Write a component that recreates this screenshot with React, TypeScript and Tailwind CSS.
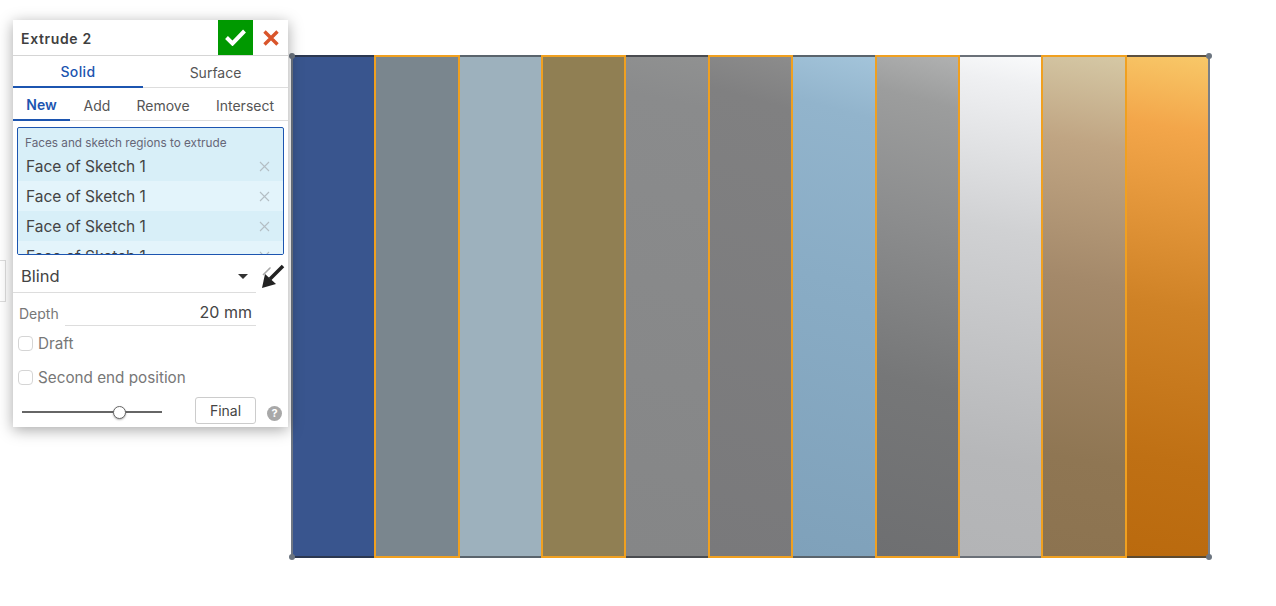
import React from "react";

const columns = [
  "bg-[#39558e] border-l-2 border-l-[#6f7784] border-t-2 border-t-[#2c3850] border-b-2 border-b-[#2c3850]",
  "bg-[#7a868e] border-2 border-[#f0a020]",
  "bg-[#9db1bd] border-t-2 border-t-[#5a646c] border-b-2 border-b-[#5a646c]",
  "bg-[#907f53] border-2 border-[#f0a020]",
  "bg-[linear-gradient(192deg,#909191,#8a8b8c_10%,#858687)] border-t-2 border-t-[#4a4c50] border-b-2 border-b-[#4a4c50]",
  "bg-[linear-gradient(195deg,#8c8c8c,#808081_10%,#79797b)] border-2 border-[#f0a020]",
  "bg-[linear-gradient(195deg,#a3c4da,#92b4cc_12%,#89acc5_45%,#7fa1ba)] border-t-2 border-t-[#5a646c] border-b-2 border-b-[#5a646c]",
  "bg-[linear-gradient(195deg,#b0b1b1,#9c9d9d_10%,#8b8c8d_35%,#767778_65%,#6e6f71)] border-2 border-[#f0a020]",
  "bg-[linear-gradient(190deg,#f9fafb,#eff0f2_6%,#d0d1d3_35%,#b6b7b9_80%,#b3b4b6)] border-t-2 border-t-[#6a7078] border-b-2 border-b-[#6a7078]",
  "bg-[linear-gradient(190deg,#d5c8a5,#c0a583_18%,#a4896a_45%,#8f7653_80%,#8c7350)] border-2 border-[#f0a020]",
  "bg-[linear-gradient(190deg,#f8c868,#f3a64a_15%,#cf8226_50%,#bf7014_80%,#ba6a0e)] border-t-2 border-t-[#5c5040] border-b-2 border-b-[#5c4a30] border-r-2 border-r-[#7a7f86]",
];

const Dot = ({ className }: { className: string }) => (
  <span className={`absolute h-[6px] w-[6px] rounded-full bg-[#6c7580] ${className}`} />
);

const Row = ({ tint }: { tint: boolean }) => (
  <div className={`flex h-[30px] shrink-0 items-center justify-between pl-2 pr-[13px] text-[15.5px] text-[#444] ${tint ? "bg-[#d8eff8]" : "bg-[#e3f4fb]"}`}>
    <span className="pt-[2px]">Face of Sketch 1</span>
    <svg width="11" height="11" viewBox="0 0 11 11" stroke="#b4bec4" strokeWidth="1.1"><path d="M1 1l9 9M10 1l-9 9" /></svg>
  </div>
);

export default function App() {
  return (
    <div className="relative h-[606px] w-[1276px] overflow-hidden bg-white pl-[291px] pt-[55px] font-['Inter',sans-serif]">
      <div className="relative flex h-[503px] w-[919px]">
        {columns.map((c, i) => (
          <div key={i} className={`h-full flex-1 ${c}`} />
        ))}
        <Dot className="-left-[2px] -top-[2px]" />
        <Dot className="-right-[2px] -top-[2px]" />
        <Dot className="-left-[2px] -bottom-[2px]" />
        <Dot className="-right-[2px] -bottom-[2px]" />
      </div>

      <div className="absolute left-0 top-[260px] h-[42px] w-[6px] border border-l-0 border-[#ddd] bg-white" />

      <div className="absolute left-[13px] top-[20px] flex h-[407px] w-[275px] flex-col bg-white shadow-[0_3px_14px_rgba(0,0,0,0.35)]">
        <div className="flex h-[36px] shrink-0 items-start border-b border-[#d5d5d5]">
          <div className="flex h-[36px] flex-1 items-center pl-2 text-[14px] font-semibold tracking-[0.65px] text-[#3f3f3f]">Extrude 2</div>
          <div className="flex h-[35px] w-[35px] items-center justify-center bg-[#009900]">
            <svg width="21" height="17" viewBox="0 0 21 17" fill="none" stroke="#fff" strokeWidth="4"><path d="M1.5 8.5l6 6L19.5 2" /></svg>
          </div>
          <div className="flex h-[35px] w-[35px] items-center justify-center">
            <svg width="16" height="16" viewBox="0 0 16 16" fill="none" stroke="#d9552b" strokeWidth="3.4"><path d="M1.5 1.5l13 13M14.5 1.5l-13 13" /></svg>
          </div>
        </div>

        <div className="flex h-[32px] shrink-0 border-b border-[#ddd] text-[14px]">
          <div className="flex h-[32px] w-[130px] items-center justify-center border-b-2 border-[#1c55b0] pt-px font-medium tracking-[0.4px] text-[#1c55b0]">Solid</div>
          <div className="flex h-[31px] flex-1 items-center justify-center pt-px text-[#555]">Surface</div>
        </div>

        <div className="flex h-[33px] shrink-0 border-b border-[#ddd] text-[14px] text-[#555]">
          <div className="flex h-[33px] w-[57px] items-center justify-center border-b-2 border-[#1c55b0] pt-[2px] font-semibold text-[#1c55b0]">New</div>
          <div className="flex h-[32px] w-[54px] items-center justify-center pt-[2px]">Add</div>
          <div className="flex h-[32px] w-[78px] items-center justify-center pt-[2px]">Remove</div>
          <div className="flex h-[32px] flex-1 items-center justify-center pt-[2px]">Intersect</div>
        </div>

        <div className="mx-1 mt-[6px] flex h-[128px] shrink-0 flex-col overflow-hidden rounded-[2px] border border-[#1c55b0] bg-[#d8eff8]">
          <div className="flex h-[23px] shrink-0 items-end pl-[7px] text-[11.75px] leading-[16px] text-[#667]">Faces and sketch regions to extrude</div>
          <Row tint />
          <Row tint={false} />
          <Row tint />
          <Row tint={false} />
        </div>

        <div className="relative flex h-[38px] w-[243px] shrink-0 items-center justify-between border-b border-[#ddd] pl-2 pr-[8px] pt-[5px] text-[16.5px] text-[#444]">
          <span>Blind</span>
          <span className="h-0 w-0 border-x-[5.5px] border-t-[5px] border-x-transparent border-t-[#333]" />
          <svg className="absolute left-[247px] top-[9px]" width="25" height="25" viewBox="0 0 25 25">
            <path d="M3 11L9 5" stroke="#a8a8a8" strokeWidth="1.6" />
            <path d="M10 3l1 1-2 2-1-1z" fill="#a8a8a8" />
            <path d="M23 2L10 15" stroke="#222" strokeWidth="3.6" />
            <path d="M2 24l3-14 11 10z" fill="#222" />
          </svg>
        </div>

        <div className="flex h-[33px] shrink-0 items-stretch pl-[6px]">
          <span className="flex w-[46px] items-center pt-[7px] text-[14px] text-[#777]">Depth</span>
          <span className="flex w-[191px] items-center justify-end border-b border-[#ddd] pr-1 pt-[6px] text-[16px] text-[#444]">20 mm</span>
        </div>

        <label className="mt-[10px] flex h-[16px] shrink-0 items-center gap-[5px] pl-[5px] text-[15.25px] text-[#777]">
          <span className="-mt-[2px] h-[15px] w-[15px] rounded-[4px] border border-[#d5d5d5]" />Draft
        </label>
        <label className="mt-[18px] flex h-[16px] shrink-0 items-center gap-[5px] pl-[5px] text-[15.25px] text-[#777]">
          <span className="-mt-[2px] h-[15px] w-[15px] rounded-[4px] border border-[#d5d5d5]" />Second end position
        </label>

        <div className="mt-[12px] flex h-[28px] shrink-0 items-center pl-[9px]">
          <div className="relative h-[2px] w-[140px] bg-[#666]">
            <span className="absolute left-[91px] -top-[5px] h-[13px] w-[13px] rounded-full border border-[#666] bg-white shadow-[0_1px_2px_rgba(0,0,0,0.3)]" />
          </div>
          <div className="mb-[3px] ml-[33px] flex h-[27px] w-[61px] items-center justify-center rounded-[3px] border border-[#ccc] text-[14px] text-[#444]">Final</div>
          <div className="ml-[11px] mt-[3px] flex h-[15px] w-[15px] items-center justify-center rounded-full bg-[#a8a8a8] text-[11px] font-bold leading-none text-white">?</div>
        </div>
      </div>
    </div>
  );
}
